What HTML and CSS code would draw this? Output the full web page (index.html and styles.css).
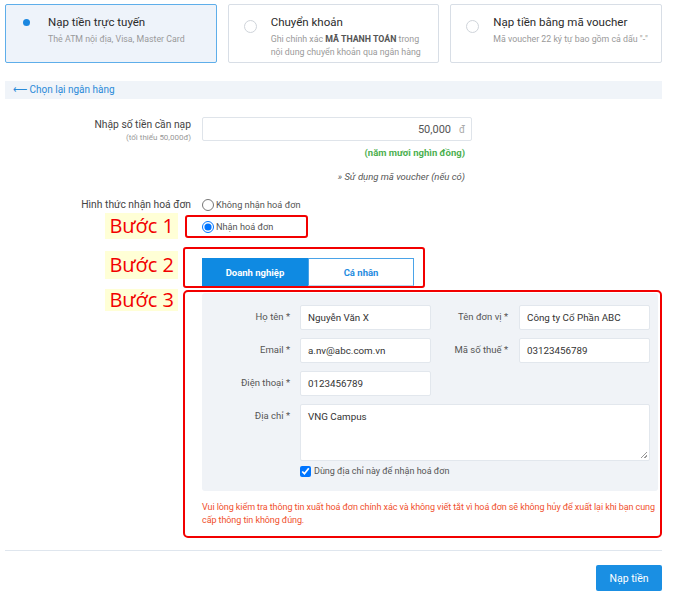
FILE: index.html
```html
<!doctype html>
<html>
<head>
  <meta charset="utf-8">
  <link rel="stylesheet" href="styles.css">
</head>
<body>
  <div class="page">
    <div class="methods">
      <div class="method active">
        <span class="dot"></span>
        <div>
          <div class="m-title">Nạp tiền trực tuyến</div>
          <div class="m-sub">Thẻ ATM nội địa, Visa, Master Card</div>
        </div>
      </div>
      <div class="method">
        <span class="dot"></span>
        <div>
          <div class="m-title">Chuyển khoản</div>
          <div class="m-sub">Ghi chính xác <b>MÃ THANH TOÁN</b> trong<br>nội dung chuyển khoản qua ngân hàng</div>
        </div>
      </div>
      <div class="method">
        <span class="dot"></span>
        <div>
          <div class="m-title">Nạp tiền bằng mã voucher</div>
          <div class="m-sub">Mã voucher 22 ký tự bao gồm cả dấu "-"</div>
        </div>
      </div>
    </div>

    <div class="back-bar"><a href="#">⟵ Chọn lại ngân hàng</a></div>

    <div class="field-row">
      <div class="field-label">Nhập số tiền cần nạp<small>(tối thiểu 50,000đ)</small></div>
      <div class="field-body">
        <div class="amount"><span>50,000</span><span class="unit">đ</span></div>
        <div class="amount-words">(năm mươi nghìn đồng)</div>
        <div class="voucher">» Sử dụng mã voucher (nếu có)</div>
      </div>
    </div>

    <div class="field-row invoice-type">
      <div class="field-label">Hình thức nhận hoá đơn</div>
      <label class="radio"><input type="radio" name="inv">Không nhận hoá đơn</label>
    </div>

    <div class="step step-1">
      <div class="step-tag"><span>Bước 1</span></div>
      <div class="step-box">
        <label class="radio"><input type="radio" name="inv" checked>Nhận hoá đơn</label>
      </div>
    </div>

    <div class="step step-2">
      <div class="step-tag"><span>Bước 2</span></div>
      <div class="step-box">
        <div class="tabs">
          <button class="tab on">Doanh nghiệp</button>
          <button class="tab">Cá nhân</button>
        </div>
      </div>
    </div>

    <div class="step step-3">
      <div class="step-tag"><span>Bước 3</span></div>
      <div class="step-box">
        <div class="invoice-panel">
          <div class="invoice-grid">
            <label class="inv-label">Họ tên *</label>
            <div class="inv-input">Nguyễn Văn X</div>
            <label class="inv-label">Tên đơn vị *</label>
            <div class="inv-input">Công ty Cổ Phần ABC</div>

            <label class="inv-label">Email *</label>
            <div class="inv-input">a.nv@abc.com.vn</div>
            <label class="inv-label">Mã số thuế *</label>
            <div class="inv-input">03123456789</div>

            <label class="inv-label">Điện thoại *</label>
            <div class="inv-input">0123456789</div>
            <div></div>
            <div></div>

            <label class="inv-label">Địa chỉ *</label>
            <div class="inv-input inv-area">VNG Campus<span class="grip"></span></div>
          </div>
          <label class="check"><input type="checkbox" checked>Dùng địa chỉ này để nhận hoá đơn</label>
        </div>
        <p class="warning">Vui lòng kiểm tra thông tin xuất hoá đơn chính xác và không viết tắt vì hoá đơn sẽ không hủy để xuất lại khi bạn cung cấp thông tin không đúng.</p>
      </div>
    </div>

    <div class="footer">
      <button class="submit">Nạp tiền</button>
    </div>
  </div>
</body>
</html>
```

FILE: styles.css
```css
body{
  margin: 0;
  font-family: Roboto, "Liberation Sans", sans-serif;
  color: #333;
  background: #fff;
}
.page{
  width: 657px;
  margin-left: 5px;
  padding-top: 4px;
}

/* payment methods */
.methods{
  display: flex;
  gap: 11px;
}
.method{
  flex: 1 1 0;
  min-width: 0;
  height: 59px;
  box-sizing: border-box;
  border: 1px solid #d8dee6;
  border-radius: 2px;
  padding: 9px 6px 0 15px;
  display: flex;
  gap: 14px;
  background: #fff;
}
.method.active{
  border-color: #5eaeea;
  background: #eef3fa;
}
.dot{
  flex-shrink: 0;
  width: 13px;
  height: 13px;
  margin-top: 6px;
  box-sizing: border-box;
  border: 1px solid #cfd4da;
  border-radius: 50%;
  position: relative;
}
.method.active .dot{
  border: none;
  margin-top: 2px;
}
.method.active .dot::after{
  content: "";
  position: absolute;
  left: 2px;
  top: 3px;
  width: 7px;
  height: 7px;
  border-radius: 50%;
  background: #1a87e0;
}
.m-title{
  font-size: 11.5px;
  line-height: 16px;
  color: #2b2b2b;
}
.m-sub{
  margin-top: 3px;
  font-size: 8.8px;
  line-height: 13px;
  color: #9a9a9a;
  white-space: nowrap;
}
.m-sub b{
  color: #555;
}

.back-bar{
  margin-top: 18px;
  height: 18px;
  background: #f0f4f9;
  padding-left: 8px;
  font-size: 10px;
  line-height: 18px;
}
.back-bar a{
  color: #2a8ad8;
  text-decoration: none;
}

/* amount + invoice type */
.field-row{
  display: flex;
  gap: 11px;
  margin-top: 18px;
}
.field-label{
  width: 186px;
  flex-shrink: 0;
  text-align: right;
  font-size: 10.3px;
  line-height: 14px;
  color: #444;
  padding-top: 1px;
}
.field-label small{
  display: block;
  font-size: 8px;
  line-height: 11px;
  color: #999;
}
.field-body{
  width: 270px;
}
.amount{
  height: 24px;
  box-sizing: border-box;
  border: 1px solid #dfe4ea;
  border-radius: 2px;
  display: flex;
  justify-content: flex-end;
  align-items: center;
  padding-right: 6px;
  font-size: 11px;
  color: #555;
}
.amount .unit{
  margin-left: 8px;
  color: #aaa;
  font-size: 10px;
}
.amount-words{
  margin-top: 6px;
  text-align: right;
  padding-right: 7px;
  font-size: 9.5px;
  line-height: 12px;
  font-weight: bold;
  color: #4cb050;
}
.voucher{
  margin-top: 12px;
  text-align: right;
  padding-right: 7px;
  font-size: 9.5px;
  line-height: 12px;
  font-style: italic;
  color: #555;
}
.invoice-type{
  margin-top: 14px;
}
.radio{
  display: flex;
  align-items: center;
  font-size: 9.2px;
  line-height: 14px;
  color: #555;
}
.radio input{
  width: 12px;
  height: 12px;
  margin: 0 2px 0 0;
}

/* steps */
.step{
  display: flex;
  align-items: flex-start;
}
.step-tag{
  width: 178px;
  flex-shrink: 0;
  display: flex;
  justify-content: flex-end;
  padding-right: 5px;
  box-sizing: border-box;
}
.step-tag span{
  background: #ffffd6;
  color: #f20000;
  font-family: "Open Sans", "Liberation Sans", sans-serif;
  font-size: 20px;
  line-height: 26px;
  padding: 0 4px;
}
.step-box{
  border: 2px solid #f20000;
  border-radius: 3px;
  box-sizing: border-box;
}
.step-1{
  margin-top: 2px;
}
.step-1 .step-tag span{
  margin-top: -1px;
}
.step-1 .step-box{
  margin-left: 2px;
  margin-top: 1px;
  width: 123px;
  height: 23px;
  padding-left: 15px;
  display: flex;
  align-items: center;
}
.step-2{
  margin-top: 8px;
}
.step-2 .step-tag span{
  margin-top: 4px;
  line-height: 28px;
}
.step-2 .step-box{
  width: 242px;
  padding: 9px 0 0 17px;
  height: 41px;
}
.step-3{
  margin-top: 2px;
}
.step-3 .step-tag span{
  margin-top: -1px;
  line-height: 22px;
}
.step-3 .step-box{
  width: 483px;
  padding: 1px 2px 9px 17px;
  border-radius: 5px;
}

.tabs{
  display: flex;
  width: 212px;
  height: 28px;
}
.tab{
  flex: 1;
  border: 1px solid #4aa3e8;
  background: #fff;
  color: #1f8ce0;
  font-family: Roboto, "Liberation Sans", sans-serif;
  font-size: 9.5px;
  font-weight: bold;
  padding: 0;
  border-bottom-color: #b9d7ef;
}
.tab.on{
  background: #0f8ae2;
  border-color: #0f8ae2;
  color: #fff;
}

/* invoice details */
.invoice-panel{
  background: #f0f3f7;
  border-radius: 3px;
  padding: 12px 0 14px 0;
}
.invoice-grid{
  display: grid;
  grid-template-columns: 98px 131px 88px 131px;
  row-gap: 8px;
}
.inv-label{
  text-align: right;
  padding-right: 10px;
  padding-top: 5px;
  font-size: 9.5px;
  line-height: 14px;
  color: #555;
}
.invoice-grid .inv-label:nth-child(4n+3){
  padding-right: 11px;
}
.inv-input{
  height: 25px;
  box-sizing: border-box;
  background: #fff;
  border: 1px solid #e2e7ed;
  border-radius: 2px;
  padding-left: 7px;
  font-size: 9.8px;
  line-height: 23px;
  color: #333;
  white-space: nowrap;
}
.inv-area{
  grid-column: 2 / 5;
  height: 57px;
  line-height: 14px;
  padding-top: 5px;
  position: relative;
}
.grip{
  position: absolute;
  right: 2px;
  bottom: 2px;
  width: 6px;
  height: 6px;
  background: linear-gradient(135deg, transparent 45%, #999 45%, #999 55%, transparent 55%, transparent 75%, #999 75%, #999 85%, transparent 85%);
}
.check{
  display: flex;
  align-items: center;
  margin: 4px 0 0 98px;
  font-size: 9px;
  line-height: 12px;
  color: #555;
}
.check input{
  width: 11px;
  height: 11px;
  margin: 0 3px 0 0;
}
.warning{
  margin: 10px -2px 0 0;
  font-size: 9px;
  letter-spacing: -0.08px;
  line-height: 13px;
  color: #f0502d;
}

/* footer */
.footer{
  margin-top: 12px;
  border-top: 1px solid #dfe6ee;
  padding-top: 14px;
  display: flex;
  justify-content: flex-end;
}
.submit{
  width: 66px;
  height: 26px;
  border: none;
  border-radius: 2px;
  background: #1a8fe3;
  color: #fff;
  font-family: Roboto, "Liberation Sans", sans-serif;
  font-size: 10.5px;
  padding: 0;
}
```
